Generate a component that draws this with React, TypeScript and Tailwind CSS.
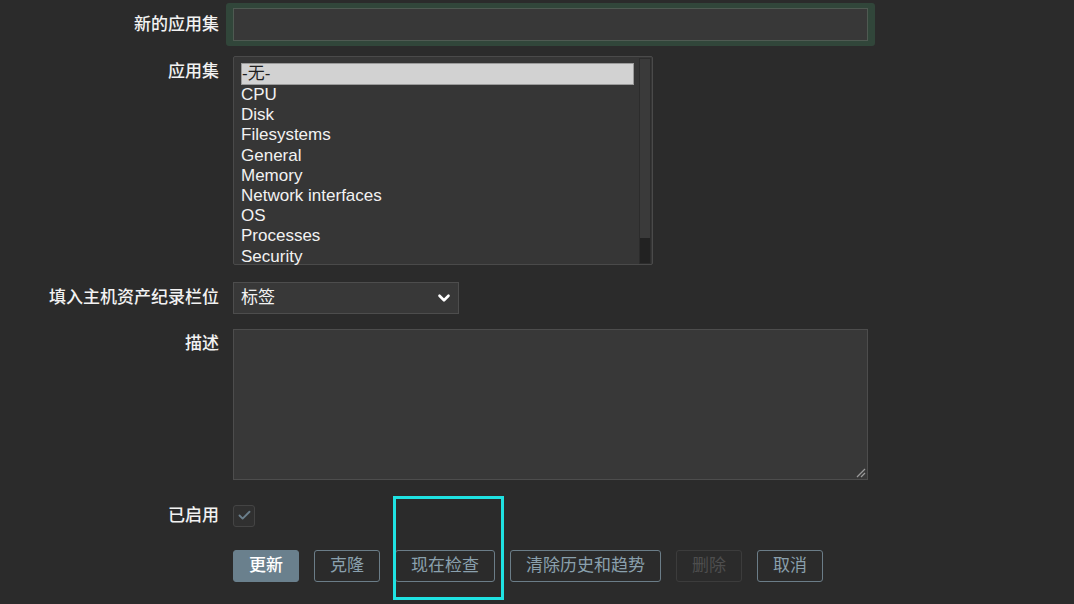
import { ChevronDown, Check } from "lucide-react";

const font = { fontFamily: '"Liberation Sans", "Noto Sans CJK SC", sans-serif' };

const apps = [
  "CPU",
  "Disk",
  "Filesystems",
  "General",
  "Memory",
  "Network interfaces",
  "OS",
  "Processes",
  "Security",
];

function Label({ children, className = "" }: { children: React.ReactNode; className?: string }) {
  return (
    <div className={`w-[219px] shrink-0 text-right text-[17px] font-medium text-[#f2f2f2] ${className}`}>
      {children}
    </div>
  );
}

export default function App() {
  return (
    <div className="relative h-[604px] w-[1074px] overflow-hidden bg-[#2b2b2b]" style={font}>
      <div className="flex flex-col pt-[3px]">
        {/* New application */}
        <div className="flex items-center gap-[7px]">
          <Label className="leading-[43px]">新的应用集</Label>
          <div className="rounded-[3px] bg-[#31463a] px-[7px] py-[5px]">
            <div className="h-[33px] w-[635px] border border-[#4f5a52] bg-[#383838]" />
          </div>
        </div>

        {/* Application list */}
        <div className="mt-[10px] flex gap-[14px]">
          <Label className="pt-[5px] leading-[22px]">应用集</Label>
          <div className="flex h-[209px] w-[420px] rounded-[2px] border border-[#4a4a4a] bg-[#363636] pl-[7px] pt-[6px]">
            <div className="w-[393px] text-[17px] leading-[20.2px] text-[#f2f2f2]">
              <div className="h-[22px] border border-[#9a9a9a] bg-[#d2d2d2] leading-[20px] text-[#1f1f1f]">-无-</div>
              {apps.map((a) => (
                <div key={a}>{a}</div>
              ))}
            </div>
            <div className="ml-auto mr-[1px] -mt-[5px] flex w-[12px] flex-col border border-[#2c2c2c] bg-[#3a3a3a]">
              <div className="flex-1" />
              <div className="h-[25px] bg-[#222222]" />
            </div>
          </div>
        </div>

        {/* Inventory field */}
        <div className="mt-[17px] flex items-center gap-[14px]">
          <Label>填入主机资产纪录栏位</Label>
          <div className="flex h-[32px] w-[226px] items-center justify-between border border-[#4d4d4d] bg-[#383838] pl-[7px] pr-[5px] text-[17px] text-[#f2f2f2]">
            <span>标签</span>
            <ChevronDown className="h-[18px] w-[18px] text-white" strokeWidth={3.5} />
          </div>
        </div>

        {/* Description */}
        <div className="mt-[15px] flex gap-[14px]">
          <Label className="pt-[4px] leading-[22px]">描述</Label>
          <div className="relative h-[151px] w-[635px] border border-[#4d4d4d] bg-[#383838]">
            <svg className="absolute bottom-[1px] right-[1px]" width="10" height="10" viewBox="0 0 10 10">
              <line x1="1" y1="9" x2="9" y2="1" stroke="#9a9a9a" strokeWidth="1.2" />
              <line x1="5" y1="9" x2="9" y2="5" stroke="#9a9a9a" strokeWidth="1.2" />
            </svg>
          </div>
        </div>

        {/* Enabled */}
        <div className="mt-[23px] flex items-center gap-[14px]">
          <Label>已启用</Label>
          <div className="flex h-[22px] w-[22px] items-center justify-center rounded-[3px] border border-[#444] bg-[#303030]">
            <Check className="h-[15px] w-[15px] text-[#6b7f8c]" strokeWidth={3} />
          </div>
        </div>

        {/* Buttons */}
        <div className="mt-[21px] flex gap-[15px] pl-[233px] text-[17px]">
          <button className="h-[32px] rounded-[3px] border border-[#6a808d] bg-[#6a808d] px-[15px] font-medium text-white">更新</button>
          <button className="h-[32px] rounded-[3px] border border-[#6b7d88] px-[15px] text-[#8aa0ad]">克隆</button>
          <button className="h-[32px] rounded-[3px] border border-[#6b7d88] px-[15px] text-[#8aa0ad]">现在检查</button>
          <button className="h-[32px] rounded-[3px] border border-[#6b7d88] px-[15px] text-[#8aa0ad]">清除历史和趋势</button>
          <button className="h-[32px] rounded-[3px] border border-[#3c3c3c] px-[15px] text-[#4e4e4e]">删除</button>
          <button className="h-[32px] rounded-[3px] border border-[#6b7d88] px-[15px] text-[#8aa0ad]">取消</button>
        </div>
      </div>

      {/* highlight overlay */}
      <div className="absolute left-[393px] top-[496px] h-[104px] w-[111px] border-[3px] border-[#1fe2e2]" />
    </div>
  );
}
